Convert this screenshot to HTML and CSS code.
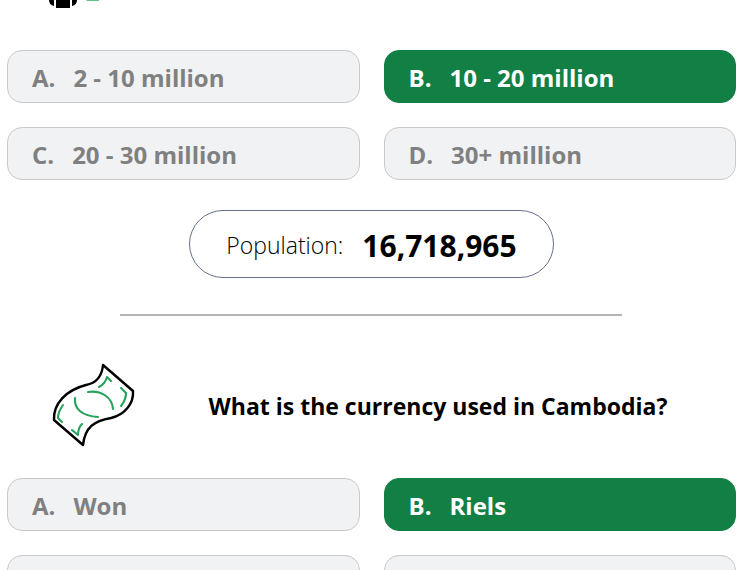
FILE: index.html
```html
<!DOCTYPE html>
<html lang="en">
<head>
  <meta charset="UTF-8" />
  <meta name="viewport" content="width=device-width, initial-scale=1.0"/>
  <title>Cambodia Quiz</title>
  <link rel="stylesheet" href="styles.css">
</head>
<body>

  <main class="quiz">
    <section class="question">
      <div class="question-end">
        <svg class="people-icon" viewBox="0 0 56 10" aria-hidden="true">
          <path d="M1 0h5v6Q1 5 1 0zM8 0h14v8H8zM24 0h5q0 5-5 6z" fill="#000"/>
          <path d="M38 0h13v1H39z" fill="#5fc287"/>
        </svg>
      </div>
      <div class="options">
        <button class="option"><span>A.</span><span>2 - 10 million</span></button>
        <button class="option correct"><span>B.</span><span>10 - 20 million</span></button>
        <button class="option"><span>C.</span><span>20 - 30 million</span></button>
        <button class="option"><span>D.</span><span>30+ million</span></button>
      </div>
      <p class="answer">Population: <strong>16,718,965</strong></p>
    </section>

    <hr class="divider">

    <section class="question">
      <div class="question-head">
        <svg class="money-icon" viewBox="0 0 84 84" fill="none" stroke-linecap="round" stroke-linejoin="round" aria-hidden="true">
          <path d="M51 2L81 28C82 41 72 52 59 55C42 58 33 64 31 82L2 57C1 41 14 27 34 22C45 20 50 13 51 2z" stroke="#000" stroke-width="2.4"/>
          <g stroke="#27a25c" stroke-width="2.1">
            <path d="M47 24Q53 21 55 14L59 18"/>
            <path d="M69 25L74 30Q74 37 69 43"/>
            <path d="M11 42Q6 49 6 55L10 59"/>
            <path d="M30 61Q26 65 26 72L20 67"/>
            <path d="M36 29C49 27 60 34 61 46"/>
            <path d="M23 35C22 46 30 53 46 54"/>
          </g>
        </svg>
        <h2>What is the currency used in Cambodia?</h2>
      </div>
      <div class="options">
        <button class="option"><span>A.</span><span>Won</span></button>
        <button class="option correct"><span>B.</span><span>Riels</span></button>
        <button class="option" aria-label="C"></button>
        <button class="option" aria-label="D"></button>
      </div>
    </section>
  </main>

</body>
</html>
```
FILE: styles.css
```css
body {
  font-family: "Open Sans", "Noto Sans", sans-serif;
  margin: 0;
  background-color: #fff;
}

.quiz {
  height: 100vh;
  overflow: hidden;
}

.question {
  padding: 0 6px 0 7px;
}

.question-end {
  height: 50px;
  padding-left: 41px;
}

.people-icon {
  display: block;
  width: 56px;
  height: 10px;
}

.options {
  display: grid;
  grid-template-columns: 1fr 1fr;
  gap: 24px;
}

.option {
  display: flex;
  align-items: center;
  gap: 18px;
  height: 53px;
  padding: 2px 24px 0;
  font-family: inherit;
  font-size: 24px;
  font-weight: 700;
  line-height: 32px;
  text-align: left;
  color: #808080;
  background-color: #f1f2f4;
  border: 1px solid #c9c9cc;
  border-radius: 15px;
  cursor: pointer;
}

.option.correct {
  color: #fff;
  background-color: #128044;
  border-color: #128044;
}

.answer {
  display: flex;
  align-items: center;
  justify-content: center;
  gap: 19px;
  box-sizing: border-box;
  width: fit-content;
  height: 68px;
  margin: 30px auto 0;
  padding: 2px 36px 0;
  font-size: 23px;
  font-weight: 350;
  border: 1px solid #667085;
  border-radius: 34px;
}

.answer strong {
  font-size: 30px;
  font-weight: 700;
}

.divider {
  width: 502px;
  max-width: 90%;
  height: 2px;
  margin: 36px auto 0;
  border: none;
  background-color: #b4b4b6;
}

.question-head {
  display: flex;
  align-items: center;
  height: 114px;
  padding: 32px 0 16px 45px;
}

.money-icon {
  flex: none;
  width: 84px;
  height: 84px;
}

.question-head h2 {
  flex: 1;
  margin: 0;
  padding: 2px 0 0 4px;
  font-size: 23px;
  font-weight: 700;
  text-align: center;
}
```
